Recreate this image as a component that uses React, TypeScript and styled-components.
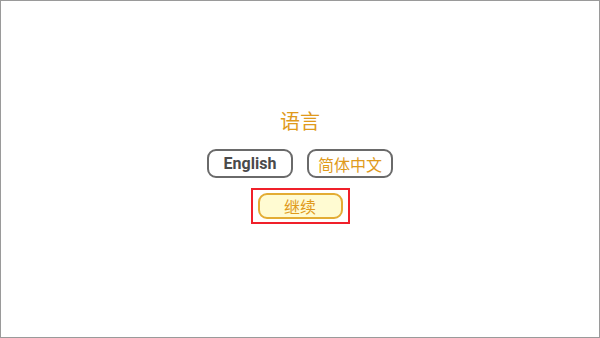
import React from "react";
import styled, { createGlobalStyle } from "styled-components";

const Global = createGlobalStyle`
  html, body { margin: 0; padding: 0; background: #fff; }
  * { box-sizing: border-box; }
`;

const Page = styled.div`
  width: 600px;
  height: 338px;
  border: 1px solid #9a9a9a;
  display: flex;
  flex-direction: column;
  align-items: center;
  justify-content: center;
  font-family: Roboto, "Noto Sans CJK SC", sans-serif;
`;

const Title = styled.h1`
  margin: 0 0 14px;
  font-size: 20px;
  font-weight: 400;
  line-height: 28px;
  color: #e09a1c;
  font-family: "Noto Sans CJK SC", sans-serif;
`;

const Row = styled.div`
  display: flex;
  gap: 14px;
  margin-bottom: 10px;
`;

const LangButton = styled.button<{ $cjk?: boolean }>`
  width: 86px;
  height: 29px;
  border: 2px solid #6a6a6a;
  border-radius: 9px;
  background: #fff;
  padding: 0;
  display: flex;
  align-items: center;
  justify-content: center;
  font-size: 16px;
  font-weight: ${(p) => (p.$cjk ? 400 : 700)};
  color: ${(p) => (p.$cjk ? "#e09a1c" : "#4a4a4a")};
  font-family: ${(p) =>
    p.$cjk ? `"Noto Sans CJK SC", sans-serif` : `Roboto, sans-serif`};
`;

const Focus = styled.div`
  border: 2px solid #f0202a;
  padding: 3px 5px;
  margin-bottom: 7px;
`;

const ContinueButton = styled.button`
  width: 85px;
  height: 26px;
  border: 2px solid #e3ac34;
  border-radius: 9px;
  background: #fffbd2;
  padding: 0;
  display: flex;
  align-items: center;
  justify-content: center;
  font-size: 16px;
  color: #e09a1c;
  font-family: "Noto Sans CJK SC", sans-serif;
`;

export default function App() {
  return (
    <>
      <Global />
      <Page>
        <Title>语言</Title>
        <Row>
          <LangButton>English</LangButton>
          <LangButton $cjk>简体中文</LangButton>
        </Row>
        <Focus>
          <ContinueButton>继续</ContinueButton>
        </Focus>
      </Page>
    </>
  );
}
